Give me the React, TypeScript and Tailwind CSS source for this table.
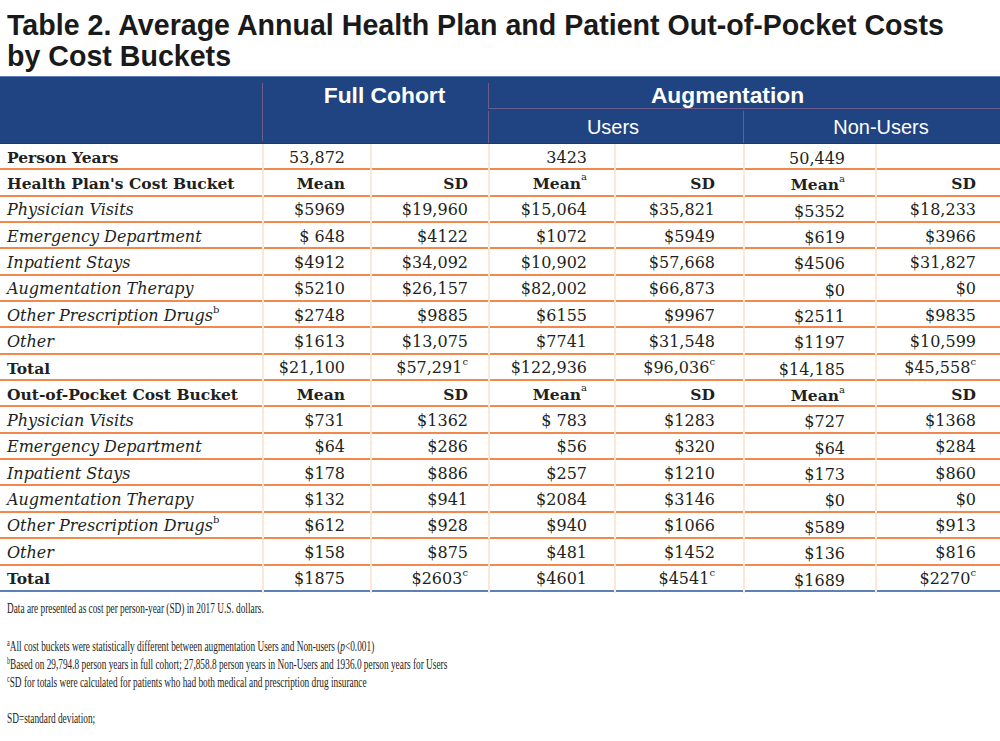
type Cell = string | { t: string; sup: string };

type Row = {
  label: Cell;
  kind: "bold" | "italic";
  heads?: boolean;
  cells: Cell[];
};

const heads: Cell[] = ["Mean", "SD", { t: "Mean", sup: "a" }, "SD", { t: "Mean", sup: "a" }, "SD"];

const rows: Row[] = [
  { label: "Person Years", kind: "bold", cells: ["53,872", "", "3423", "", "50,449", ""] },
  { label: "Health Plan's Cost Bucket", kind: "bold", heads: true, cells: heads },
  { label: "Physician Visits", kind: "italic", cells: ["$5969", "$19,960", "$15,064", "$35,821", "$5352", "$18,233"] },
  { label: "Emergency Department", kind: "italic", cells: ["$ 648", "$4122", "$1072", "$5949", "$619", "$3966"] },
  { label: "Inpatient Stays", kind: "italic", cells: ["$4912", "$34,092", "$10,902", "$57,668", "$4506", "$31,827"] },
  { label: "Augmentation Therapy", kind: "italic", cells: ["$5210", "$26,157", "$82,002", "$66,873", "$0", "$0"] },
  {
    label: { t: "Other Prescription Drugs", sup: "b" },
    kind: "italic",
    cells: ["$2748", "$9885", "$6155", "$9967", "$2511", "$9835"],
  },
  { label: "Other", kind: "italic", cells: ["$1613", "$13,075", "$7741", "$31,548", "$1197", "$10,599"] },
  {
    label: "Total",
    kind: "bold",
    cells: [
      "$21,100",
      { t: "$57,291", sup: "c" },
      "$122,936",
      { t: "$96,036", sup: "c" },
      "$14,185",
      { t: "$45,558", sup: "c" },
    ],
  },
  { label: "Out-of-Pocket Cost Bucket", kind: "bold", heads: true, cells: heads },
  { label: "Physician Visits", kind: "italic", cells: ["$731", "$1362", "$ 783", "$1283", "$727", "$1368"] },
  { label: "Emergency Department", kind: "italic", cells: ["$64", "$286", "$56", "$320", "$64", "$284"] },
  { label: "Inpatient Stays", kind: "italic", cells: ["$178", "$886", "$257", "$1210", "$173", "$860"] },
  { label: "Augmentation Therapy", kind: "italic", cells: ["$132", "$941", "$2084", "$3146", "$0", "$0"] },
  {
    label: { t: "Other Prescription Drugs", sup: "b" },
    kind: "italic",
    cells: ["$612", "$928", "$940", "$1066", "$589", "$913"],
  },
  { label: "Other", kind: "italic", cells: ["$158", "$875", "$481", "$1452", "$136", "$816"] },
  {
    label: "Total",
    kind: "bold",
    cells: ["$1875", { t: "$2603", sup: "c" }, "$4601", { t: "$4541", sup: "c" }, "$1689", { t: "$2270", sup: "c" }],
  },
];

// right padding per data column, measured off the scan
const pads = ["pr-[25px]", "pr-[20px]", "pr-[27px]", "pr-[28px]", "pr-[30px]", "pr-[24px]"];

const cols = "grid grid-cols-[262px_108px_118px_126px_129px_132px_125px]";

function Text({ c }: { c: Cell }) {
  if (typeof c === "string") return <>{c}</>;
  return (
    <>
      {c.t}
      <sup className="text-[10px] relative -top-[6px] not-italic font-normal">{c.sup}</sup>
    </>
  );
}

function BodyRow({ row, last }: { row: Row; last: boolean }) {
  return (
    <div
      className={`${cols} h-[26.35px] ${
        last ? "border-b-2 border-[#5f7fb8]" : "border-b-2 border-[#f3884c]"
      }`}
    >
      <div
        className={`flex items-center pl-[7px] whitespace-nowrap ${
          row.kind === "bold" ? "font-bold text-[15.5px]" : "italic text-[16px]"
        }`}
      >
        <Text c={row.label} />
      </div>
      {row.cells.map((c, i) => (
        <div
          key={i}
          className={`flex items-center justify-end border-l-2 border-[#fde6da] whitespace-nowrap ${pads[i]} ${
            i === 4 ? "pt-[3px]" : ""
          } ${row.heads ? "font-bold text-[15.5px]" : "text-[16px]"}`}
        >
          <Text c={c} />
        </div>
      ))}
    </div>
  );
}

function Note({ sup, children }: { sup?: string; children: React.ReactNode }) {
  return (
    <div className="h-[18px] whitespace-nowrap">
      <span className="inline-block origin-left scale-x-[0.6]">
        {sup && <sup className="text-[10px] relative -top-[5px]">{sup}</sup>}
        {children}
      </span>
    </div>
  );
}

export default function App() {
  return (
    <div className="w-[1000px] h-[741px] bg-white overflow-hidden text-[#231f20]">
      <h1 className="pt-[10px] pl-[7px] pb-[4px] font-['Liberation_Sans',Arial,sans-serif] font-bold text-[28.6px] leading-[31px] text-[#1a1a1a]">
        Table 2. Average Annual Health Plan and Patient Out-of-Pocket Costs
        <br />
        by Cost Buckets
      </h1>

      <div className="font-['Liberation_Sans',Arial,sans-serif] text-white bg-[#1f4481] border-t border-[#5b7db8] border-b border-b-[#173870]">
        <div className={`${cols} grid-rows-[34px_32px]`}>
          <div className="row-span-2" />
          <div className="row-span-2 col-span-2 mt-[8px] border-l border-[#6a5c8c] pl-[18px] text-center font-bold text-[22.8px] leading-[24px] -translate-y-[2px]">
            Full Cohort
          </div>
          <div className="col-span-4 mt-[8px] border-l border-b border-[#6a5c8c] pr-[34px] text-center font-bold text-[22.8px] leading-[24px] -translate-y-[2px]">
            Augmentation
          </div>
          <div className="col-span-2 border-l border-[#6a5c8c] flex items-center justify-center pr-[6px] text-[20px]">
            Users
          </div>
          <div className="col-span-2 border-l border-[#6a5c8c] flex items-center justify-center pl-[18px] text-[20px]">
            Non-Users
          </div>
        </div>
      </div>

      <div className="font-['DejaVu_Serif',serif]">
        {rows.map((r, i) => (
          <BodyRow key={i} row={r} last={i === rows.length - 1} />
        ))}
      </div>

      <div className="pl-[7px] pt-[7px] font-['Liberation_Serif','Times_New_Roman',serif] text-[15.5px] leading-[18px] text-[#222]">
        <Note>Data are presented as cost per person-year (SD) in 2017 U.S. dollars.</Note>
        <div className="h-[20px]" />
        <Note sup="a">
          All cost buckets were statistically different between augmentation Users and Non-users (<i>p</i>&lt;0.001)
        </Note>
        <Note sup="b">
          Based on 29,794.8 person years in full cohort; 27,858.8 person years in Non-Users and 1936.0 person years for
          Users
        </Note>
        <Note sup="c">SD for totals were calculated for patients who had both medical and prescription drug insurance</Note>
        <div className="h-[18px]" />
        <Note>SD=standard deviation;</Note>
      </div>
    </div>
  );
}
